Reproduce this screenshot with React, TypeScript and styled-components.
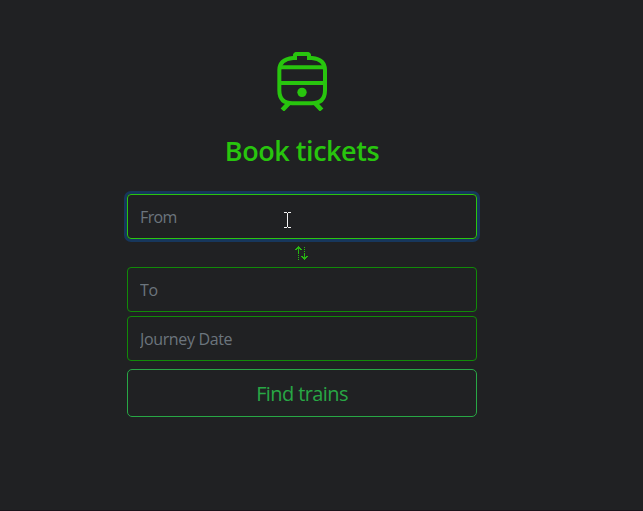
import React from "react";
import styled, { createGlobalStyle } from "styled-components";

const GlobalStyle = createGlobalStyle`
  * { box-sizing: border-box; }
  body {
    margin: 0;
    background: #202123;
    font-family: "Segoe UI", "Open Sans", "Noto Sans", sans-serif;
    overflow: hidden;
  }
`;

const Page = styled.main`
  height: 511px;
  padding: 51px 166px 0 127px;
  border-bottom: 1px solid #1a141b;
  display: flex;
  flex-direction: column;
`;

const TrainIcon = styled.svg`
  display: block;
  width: 50px;
  height: 60px;
  align-self: center;
`;

const Title = styled.h1`
  margin: 23px 0 26px;
  height: 34px;
  line-height: 34px;
  text-align: center;
  font-size: 27px;
  font-weight: 600;
  letter-spacing: -0.45px;
  color: #28c50e;
  white-space: nowrap;
`;

const Form = styled.form`
  display: flex;
  flex-direction: column;
`;

const FieldWrap = styled.div`
  position: relative;
  display: flex;
`;

const Field = styled.input<{ $active?: boolean; $tracking: string }>`
  width: 100%;
  height: 45px;
  padding: 0 12px;
  border: 1px solid ${(p) => (p.$active ? "#2ac50f" : "#118a08")};
  border-radius: 4px;
  outline: none;
  background: transparent;
  box-shadow: ${(p) => (p.$active ? "0 0 0 3px #17375c" : "none")};
  color: #6c757d;
  font: 400 16px "Segoe UI", "Open Sans", "Noto Sans", sans-serif;
  letter-spacing: ${(p) => p.$tracking};
  &::placeholder { color: #6c757d; opacity: 1; }
`;

const Pointer = styled.svg`
  position: absolute;
  left: 157px;
  top: 18px;
  width: 7px;
  height: 16px;
`;

const Swap = styled.button`
  height: 28px;
  padding: 0 2px 0 0;
  border: 0;
  background: none;
  display: flex;
  align-items: center;
  justify-content: center;
`;

const Stack = styled.div`
  display: flex;
  flex-direction: column;
  gap: 4px;
`;

const Submit = styled.button`
  margin-top: 8px;
  height: 48px;
  padding: 0;
  border: 1px solid #28a745;
  border-radius: 5px;
  background: transparent;
  color: #28a745;
  font: 400 20px "Segoe UI", "Open Sans", "Noto Sans", sans-serif;
  letter-spacing: -0.6px;
`;

export default function App() {
  return (
    <>
      <GlobalStyle />
      <Page>
        <TrainIcon viewBox="45 33 150 180" fill="none" stroke="#28c50e" strokeWidth="12">
          <path d="M93 54H99V48Q99 42 106 42H134Q141 42 141 48V54H150Q189 58 189 90V151Q189 190 149 190H91Q52 190 52 151V90Q52 58 93 54Z" />
          <path stroke="#202123" strokeWidth="9" d="M104 54H136" />
          <path d="M99 60V48Q99 42 106 42H134Q141 42 141 48V60" />
          <path d="M52 82H189M52 129H189" />
          <path strokeWidth="14" d="M80 190L61 210M160 190L179 210" />
          <circle cx="120" cy="157" r="14" fill="#28c50e" stroke="none" />
        </TrainIcon>
        <Title>Book tickets</Title>
        <Form>
          <FieldWrap>
            <Field $active $tracking="-0.6px" placeholder="From" />
            <Pointer viewBox="0 0 7 16" fill="#f4f4f4" shapeRendering="crispEdges">
              <path d="M0 0h3v1h1V0h3v1H4v14h3v1H4v-1H3v1H0v-1h3V1H0z" />
            </Pointer>
          </FieldWrap>
          <Swap type="button" aria-label="Swap stations">
            <svg width="13" height="14" viewBox="0 0 13 14" fill="#28b512" shapeRendering="crispEdges">
              <path d="M3 0h1v1h1v1h1v1h1v1H5V3H4v5H3V3H2v1H0V3h1V2h1V1h1zM3 9h1v1H3zM3 11h1v1H3zM3 13h1v1H3z" />
              <path d="M9 1h1v1H9zM9 3h1v1H9zM9 5h1v1H9zM9 7h1v4h1v-1h2v1h-1v1h-1v1h-1v1H9v-1H8v-1H7v-1H6v-1h2v1h1z" />
            </svg>
          </Swap>
          <Stack>
            <Field $tracking="-0.2px" placeholder="To" />
            <Field $tracking="-0.35px" placeholder="Journey Date" />
          </Stack>
          <Submit type="button">Find trains</Submit>
        </Form>
      </Page>
    </>
  );
}
